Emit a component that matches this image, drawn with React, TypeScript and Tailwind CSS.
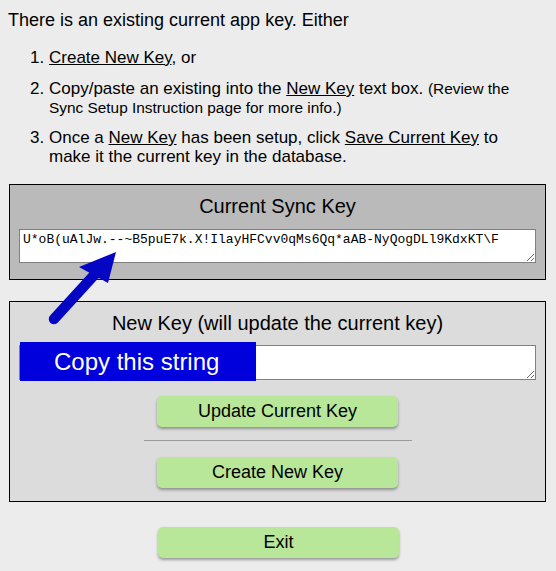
import React from "react";

const KEY = "U*oB(uAlJw.--~B5puE7k.X!IlayHFCvv0qMs6Qq*aAB-NyQogDLl9KdxKT\\F";

function GreenButton({ children }: { children: React.ReactNode }) {
  return (
    <button className="w-[241px] h-[31px] rounded-[5px] bg-[#b8e79a] text-[18px] leading-[31px] text-black shadow-[0_2px_3px_rgba(0,0,0,0.35)]">
      {children}
    </button>
  );
}

export default function App() {
  return (
    <div
      className="relative w-[556px] h-[571px] overflow-hidden bg-[#ececec] text-black"
      style={{ fontFamily: '"Liberation Sans", Arial, sans-serif' }}
    >
      <p className="pl-[8px] pt-[10px] text-[18px] leading-[20px]">
        There is an existing current app key. Either
      </p>
      <ol className="mt-[18px] pl-[30px] text-[17px] leading-[19px]">
        <li className="flex">
          <span className="w-[19px] shrink-0">1.</span>
          <span>
            <span className="underline">Create New Key</span>, or
          </span>
        </li>
        <li className="flex mt-[12px]">
          <span className="w-[19px] shrink-0">2.</span>
          <span>
            Copy/paste an existing into the <span className="underline">New Key</span> text box.{" "}
            <span className="text-[15.4px]">(Review the</span>
            <br />
            <span className="text-[15.4px]">Sync Setup Instruction page for more info.)</span>
          </span>
        </li>
        <li className="flex mt-[11px]">
          <span className="w-[19px] shrink-0">3.</span>
          <span>
            Once a <span className="underline">New Key</span> has been setup, click{" "}
            <span className="underline">Save Current Key</span> to
            <br />
            make it the current key in the database.
          </span>
        </li>
      </ol>

      <div className="ml-[9px] mt-[18px] w-[537px] border border-black bg-[#bababa] px-[9px] pt-[9px] pb-[16px]">
        <div className="text-center text-[20px] leading-[24px]">Current Sync Key</div>
        <textarea
          readOnly
          value={KEY}
          className="mt-[11px] block w-full h-[34px] bg-white border border-[#808080] px-[3px] py-[2px] text-[13px] leading-[15px] outline-none"
          style={{ fontFamily: '"Liberation Mono", "Courier New", monospace' }}
        />
      </div>

      <div className="ml-[9px] mt-[21px] w-[537px] border border-black bg-[#dcdcdc] px-[9px] pt-[9px] pb-[13px]">
        <div className="text-center text-[20px] leading-[24px]">New Key (will update the current key)</div>
        <div className="relative mt-[10px]">
          <textarea
            readOnly
            value=""
            className="block w-full h-[35px] bg-white border border-[#808080] px-[3px] py-[2px] text-[13px] leading-[15px] outline-none"
            style={{ fontFamily: '"Liberation Mono", "Courier New", monospace' }}
          />
          <div className="absolute left-[1px] top-[-3px] w-[236px] h-[39px] bg-[#0000dc] pl-[34px] text-[24px] leading-[39px] text-white">
            Copy this string
          </div>
        </div>
        <div className="mt-[16px] flex flex-col items-center">
          <GreenButton>Update Current Key</GreenButton>
          <div className="mt-[13px] w-[268px] h-px bg-[#9a9a9a]" />
          <div className="mt-[16px]">
            <GreenButton>Create New Key</GreenButton>
          </div>
        </div>
      </div>

      <div className="mt-[25px] flex justify-center pl-[1px]">
        <GreenButton>Exit</GreenButton>
      </div>

      <svg
        className="absolute left-0 top-0 pointer-events-none"
        width="556"
        height="571"
        viewBox="0 0 556 571"
      >
        <line x1="54" y1="319" x2="96" y2="273" stroke="#0505c4" strokeWidth="10.5" strokeLinecap="round" />
        <polygon points="116,252 79,267 108,283" fill="#0505c4" />
      </svg>
    </div>
  );
}
